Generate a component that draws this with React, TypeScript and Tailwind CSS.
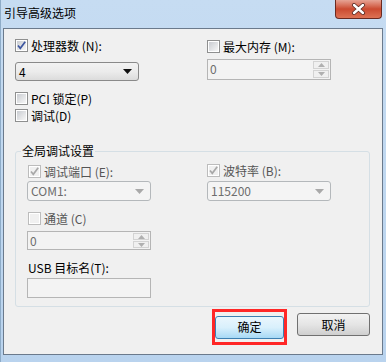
import React from 'react'

const font = { fontFamily: '"Noto Sans CJK SC", "Liberation Sans", sans-serif' }

function CheckBox({ checked, disabled }: { checked?: boolean; disabled?: boolean }) {
  return (
    <span
      className={`relative flex w-[13px] h-[13px] shrink-0 border ${
        disabled ? 'border-[#bcbcbc] bg-[#f4f4f4]' : 'border-[#8e8f8f] bg-[#f4f4f4]'
      }`}
    >
      <span
        className={`block w-full h-full border border-white ${
          disabled ? 'bg-[#f0f0f0]' : 'bg-gradient-to-br from-[#c9ccd1] to-[#f7f7f7]'
        }`}
      />
      {checked && (
        <svg className="absolute left-0 top-0 w-[11px] h-[11px]" viewBox="0 0 11 11">
          <path
            d="M2 5.5 L4.3 8.3 L9.2 1.8"
            fill="none"
            stroke={disabled ? '#a8a8a8' : '#3d56a0'}
            strokeWidth={1.7}
          />
        </svg>
      )}
    </span>
  )
}

function CheckRow({
  label,
  checked,
  disabled,
}: {
  label: string
  checked?: boolean
  disabled?: boolean
}) {
  return (
    <div className="flex items-center h-[13px]">
      <CheckBox checked={checked} disabled={disabled} />
      <span
        className={`ml-[3px] text-[12px] leading-[13px] whitespace-nowrap ${
          disabled ? 'text-[#555]' : 'text-black'
        }`}
      >
        {label}
      </span>
    </div>
  )
}

function Arrow({ color }: { color: string }) {
  return (
    <svg width="9" height="5" viewBox="0 0 9 5">
      <path d="M0 0 H9 L4.5 5 Z" fill={color} />
    </svg>
  )
}

function Combo({ value, disabled }: { value: string; disabled?: boolean }) {
  if (disabled) {
    return (
      <div className="flex items-center justify-between w-[124px] h-[20px] rounded-[3px] border border-[#b4b8bb] bg-[#f4f4f4] pl-[3px] pr-[6px]">
        <span className="text-[12px] leading-[14px] text-[#6d6d6d]">{value}</span>
        <Arrow color="#a9a9a9" />
      </div>
    )
  }
  return (
    <div className="flex items-center justify-between w-[124px] h-[19px] rounded-[3px] border border-[#8a8a8a] bg-gradient-to-b from-[#f3f3f3] via-[#ececec] to-[#dcdcdc] pl-[3px] pr-[6px]">
      <span className="text-[12px] leading-[14px] text-black">{value}</span>
      <Arrow color="#111" />
    </div>
  )
}

function Spin({ value, h }: { value: string; h: string }) {
  return (
    <div className={`flex w-[124px] ${h} border border-[#b5b5b5] bg-[#f3f3f3]`}>
      <span className="flex-1 pl-[2px] text-[12px] leading-[17px] text-[#6d6d6d]">{value}</span>
      <div className="flex flex-col w-[16px] my-[1px] mr-[1px] gap-[1px]">
        <div className="flex-1 flex items-center justify-center border border-[#d3d3d3] bg-[#f0f0f0]">
          <svg width="7" height="4" viewBox="0 0 7 4">
            <path d="M0 4 H7 L3.5 0 Z" fill="#b0b0b0" />
          </svg>
        </div>
        <div className="flex-1 flex items-center justify-center border border-[#d3d3d3] bg-[#f0f0f0]">
          <svg width="7" height="4" viewBox="0 0 7 4">
            <path d="M0 0 H7 L3.5 4 Z" fill="#b0b0b0" />
          </svg>
        </div>
      </div>
    </div>
  )
}

function Button({ label, isDefault }: { label: string; isDefault?: boolean }) {
  return (
    <button
      className={`h-[23px] rounded-[3px] border text-[12px] leading-[14px] text-black ${
        isDefault
          ? 'w-[69px] border-[#3c7fb1] bg-gradient-to-b from-[#eaf6fd] via-[#d9f0fc] to-[#a7d9f5]'
          : 'w-[73px] border-[#707070] bg-gradient-to-b from-[#f2f2f2] via-[#e5e5e5] to-[#cfcfcf]'
      }`}
    >
      {label}
    </button>
  )
}

export default function App() {
  return (
    <div
      className="w-[386px] h-[362px] flex flex-col bg-gradient-to-b from-[#c6dcf2] to-[#b9d3ee] border-l border-[#8eacc8]"
      style={font}
    >
      {/* Title bar */}
      <div className="flex h-[28px] shrink-0">
        <div className="flex-1 pl-[3px] pt-[6px] text-[12px] leading-[14px] text-black">引导高级选项</div>
        <div className="mr-[4px] w-[47px] h-[19px] rounded-b-[4px] border border-t-0 border-[#6b2a20] bg-gradient-to-b from-[#e6a394] via-[#cb4a30] to-[#dd7254] flex items-center justify-center">
          <svg width="15" height="12" viewBox="0 0 15 12">
            <path d="M3 2 L12 10 M12 2 L3 10" stroke="#5a2b24" strokeWidth={4} strokeLinecap="round" />
            <path d="M3 2 L12 10 M12 2 L3 10" stroke="#fff" strokeWidth={2.4} strokeLinecap="round" />
          </svg>
        </div>
      </div>

      {/* Client area */}
      <div className="ml-[2px] w-[380px] h-[327px] border border-[#6b7a8c] bg-[#f0f0f0] flex flex-col">
        <div className="flex pl-[11px]">
          <div className="w-[192px] flex flex-col pt-[10px]">
            <CheckRow label="处理器数 (N):" checked />
            <div className="mt-[10px]">
              <Combo value="4" />
            </div>
            <div className="mt-[11px]">
              <CheckRow label="PCI 锁定(P)" />
            </div>
            <div className="mt-[4px]">
              <CheckRow label="调试(D)" />
            </div>
          </div>
          <div className="flex flex-col pt-[11px]">
            <CheckRow label="最大内存 (M):" />
            <div className="mt-[6px]">
              <Spin value="0" h="h-[21px]" />
            </div>
          </div>
        </div>

        <fieldset className="ml-[11px] mt-[22px] w-[355px] rounded-[3px] border border-[#d5dfe5] pb-[8px]">
          <legend className="ml-[5px] px-[1px] text-[12px] leading-[14px] text-black">全局调试设置</legend>
          <div className="flex pl-[11px] pt-[7px]">
            <div className="w-[180px] flex flex-col">
              <div className="ml-[1px]">
                <CheckRow label="调试端口 (E):" checked disabled />
              </div>
              <div className="mt-[3px]">
                <Combo value="COM1:" disabled />
              </div>
              <div className="ml-[1px] mt-[11px]">
                <CheckRow label="通道 (C)" disabled />
              </div>
              <div className="mt-[6px]">
                <Spin value="0" h="h-[19px]" />
              </div>
              <div className="mt-[11px] ml-[1px] text-[12px] leading-[14px] text-black">USB 目标名(T):</div>
              <div className="mt-[3px] w-[124px] h-[20px] border border-[#b5b5b5] bg-[#f3f3f3]" />
            </div>
            <div className="flex flex-col -mt-[1px]">
              <CheckRow label="波特率 (B):" checked disabled />
              <div className="mt-[4px]">
                <Combo value="115200" disabled />
              </div>
            </div>
          </div>
        </fieldset>

        <div className="flex justify-end gap-[13px] mt-[6px] mr-[12px]">
          <div className="relative">
            <Button label="确定" isDefault />
            <div className="absolute -left-[3px] -top-[4px] -right-[3px] -bottom-[6px] border-[3px] border-[#ff2727]" />
          </div>
          <Button label="取消" />
        </div>
      </div>
    </div>
  )
}
